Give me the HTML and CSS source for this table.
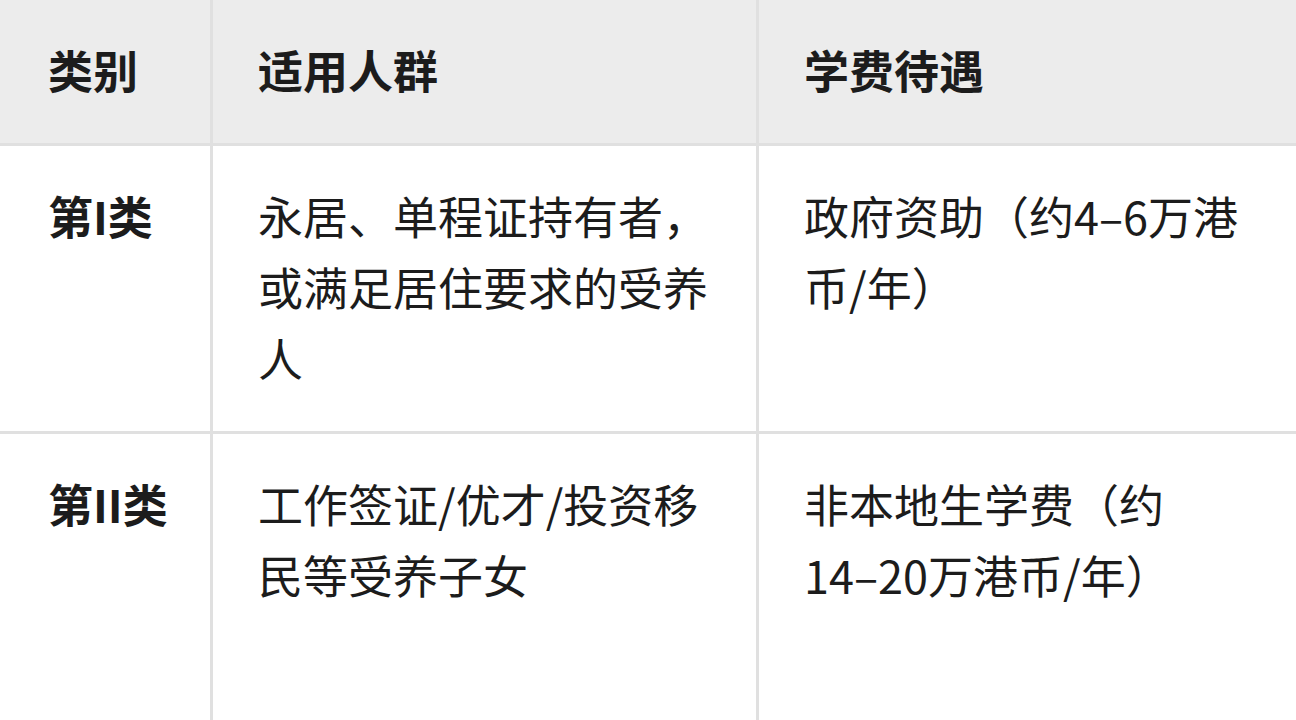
FILE: index.html
```html
<!DOCTYPE html>
<html lang="zh-CN">
<head>
<meta charset="utf-8">
<link rel="stylesheet" href="styles.css">
</head>
<body>
<table class="grid">
  <colgroup>
    <col class="c1">
    <col class="c2">
    <col class="c3">
  </colgroup>
  <thead>
    <tr>
      <th>类别</th>
      <th>适用人群</th>
      <th>学费待遇</th>
    </tr>
  </thead>
  <tbody>
    <tr>
      <td class="kind">第I类</td>
      <td>永居、单程证持有者，或满足居住要求的受养人</td>
      <td>政府资助（约<span class="nw">4–6</span>万港币/年）</td>
    </tr>
    <tr class="tall">
      <td class="kind">第II类</td>
      <td>工作签证/优才/投资移民等受养子女</td>
      <td>非本地生学费（约<span class="nw">14–20</span>万港币/年）</td>
    </tr>
  </tbody>
</table>
</body>
</html>
```
FILE: styles.css
```css
html, body {
  margin: 0;
  padding: 0;
  background: #ffffff;
  overflow: hidden;
}
body {
  font-family: "Noto Sans CJK SC", "Noto Sans", sans-serif;
  color: #1c1c1c;
}
.grid {
  border-collapse: separate;
  border-spacing: 0;
  table-layout: fixed;
  width: 1296px;
}
.c1 { width: 213px; }
.c2 { width: 546px; }
.c3 { width: 537px; }
.grid th,
.grid td {
  font-size: 45px;
  line-height: 71px;
  padding: 34px 46px 38px 45px;
  text-align: left;
  vertical-align: top;
  border-right: 3px solid #e0e0e0;
  border-bottom: 3px solid #e0e0e0;
}
.grid th:first-child,
.grid td:first-child {
  padding-left: 48px;
  padding-right: 20px;
}
.grid th:last-child,
.grid td:last-child {
  border-right: none;
}
.grid th {
  background: #ececec;
  font-weight: 700;
}
.grid td.kind {
  font-weight: 700;
}
.nw {
  white-space: nowrap;
}
.tall td {
  height: 300px;
}
```
